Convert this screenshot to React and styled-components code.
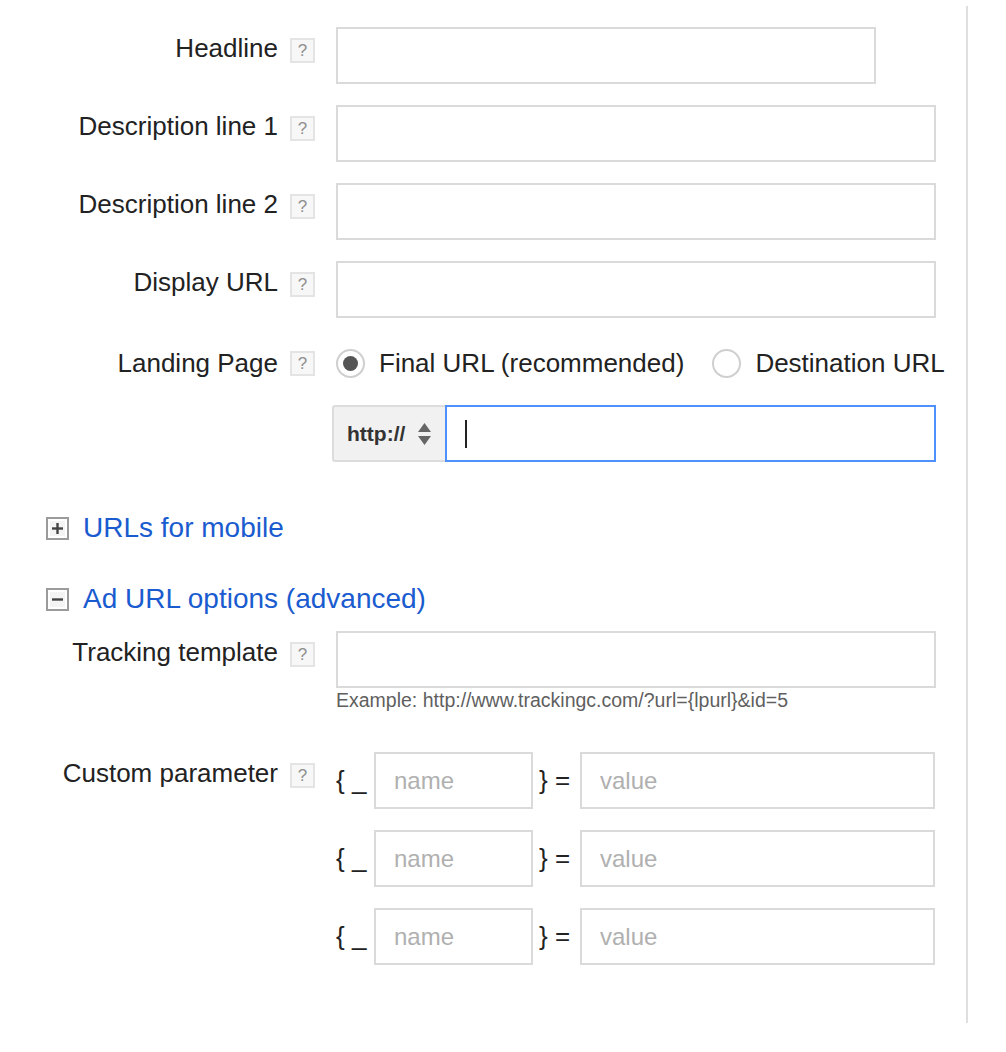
import React from 'react';
import styled, { createGlobalStyle } from 'styled-components';

const Global = createGlobalStyle`
  body {
    margin: 0;
    background: #fff;
    font-family: Arial, "Liberation Sans", Helvetica, sans-serif;
    color: #222;
  }
`;

const Page = styled.div`
  box-sizing: border-box;
  margin-top: 6px;
  width: 968px;
  min-height: 1017px;
  padding-top: 21px;
  border-right: 2px solid #dfdfdf;
`;

const Row = styled.div`
  display: flex;
  align-items: ${(p) => (p.$center ? 'center' : 'flex-start')};
  margin-top: ${(p) => p.$top || 0}px;
`;

const Label = styled.div`
  width: 278px;
  flex-shrink: 0;
  text-align: right;
  font-size: 26px;
  line-height: 30px;
  padding-top: ${(p) => (p.$center ? 0 : 6)}px;
  color: #222;
  white-space: nowrap;
`;

const Help = styled.span`
  box-sizing: border-box;
  width: 25px;
  height: 25px;
  margin-left: 12px;
  margin-top: ${(p) => (p.$center ? 0 : 11)}px;
  flex-shrink: 0;
  border: 2px solid #e4e4e4;
  background: #f7f7f7;
  color: #8f8f8f;
  font-size: 17px;
  line-height: 21px;
  text-align: center;
`;

const Field = styled.div`
  margin-left: 21px;
  display: flex;
  flex-direction: column;
`;

const TextBox = styled.div`
  box-sizing: border-box;
  width: ${(p) => p.$w}px;
  flex-shrink: 0;
  height: 57px;
  border: 2px solid #dadada;
  background: #fff;
  display: flex;
  align-items: center;
  padding-left: 18px;
  font-size: 24px;
  color: #b0b0b0;
`;

const Radios = styled.div`
  display: flex;
  align-items: center;
  flex-shrink: 0;
  white-space: nowrap;
  font-size: 26px;
  line-height: 32px;
  margin-left: 21px;
`;

const RadioOpt = styled.label`
  display: flex;
  align-items: center;
  gap: 14px;
  margin-right: 28px;
`;

const RadioCircle = styled.span`
  box-sizing: border-box;
  width: 29px;
  height: 29px;
  border-radius: 50%;
  border: 2px solid #cfcfcf;
  background: #fff;
  display: flex;
  align-items: center;
  justify-content: center;
  &::after {
    content: '';
    display: ${(p) => (p.$on ? 'block' : 'none')};
    width: 15px;
    height: 15px;
    border-radius: 50%;
    background: #555;
  }
`;

const UrlGroup = styled.div`
  display: flex;
  margin-left: 332px;
  margin-top: 26px;
`;

const Protocol = styled.div`
  box-sizing: border-box;
  width: 113px;
  height: 57px;
  background: #f1f1f1;
  border: 2px solid #dcdcdc;
  border-right: none;
  border-radius: 3px 0 0 3px;
  display: flex;
  align-items: center;
  padding-left: 13px;
  gap: 12px;
  font-size: 21px;
  font-weight: bold;
  color: #333;
`;

const FocusBox = styled.div`
  box-sizing: border-box;
  width: 491px;
  height: 57px;
  border: 2px solid #4d90fe;
  display: flex;
  align-items: center;
  padding-left: 18px;
`;

const Caret = styled.span`
  width: 2px;
  height: 28px;
  background: #222;
`;

const Toggle = styled.div`
  display: flex;
  align-items: center;
  gap: 14px;
  margin-left: 46px;
  margin-top: ${(p) => p.$top}px;
  font-size: 28px;
  line-height: 32px;
  color: #1a5ccf;
`;

const Hint = styled.div`
  font-size: 19.5px;
  line-height: 22px;
  color: #5f5f5f;
  margin-top: 1px;
`;

const ParamList = styled.div`
  margin-left: 21px;
  display: flex;
  flex-direction: column;
  gap: 21px;
`;

const ParamRow = styled.div`
  display: flex;
  align-items: center;
  font-size: 26px;
  color: #222;
`;

const Brace = styled.span`
  width: ${(p) => p.$w}px;
  flex-shrink: 0;
  padding-left: ${(p) => p.$pl || 0}px;
  box-sizing: border-box;
  white-space: nowrap;
`;

function ToggleIcon({ open }) {
  return (
    <svg width="23" height="23" viewBox="0 0 23 23">
      <rect x="1" y="1" width="21" height="21" fill="#fff" stroke="#9b9b9b" strokeWidth="2" />
      <rect x="4" y="4" width="15" height="15" fill="#f4f4f4" />
      <line x1="6" y1="11.5" x2="17" y2="11.5" stroke="#444" strokeWidth="2.4" />
      {!open && <line x1="11.5" y1="6" x2="11.5" y2="17" stroke="#444" strokeWidth="2.4" />}
    </svg>
  );
}

function Arrows() {
  return (
    <svg width="15" height="24" viewBox="0 0 15 24">
      <path d="M7.5 1 L14 10 L1 10 Z" fill="#666" />
      <path d="M7.5 23 L14 14 L1 14 Z" fill="#666" />
    </svg>
  );
}

function FormRow({ label, width = 600, top = 0 }) {
  return (
    <Row $top={top}>
      <Label>{label}</Label>
      <Help>?</Help>
      <Field>
        <TextBox $w={width} />
      </Field>
    </Row>
  );
}

export default function App() {
  return (
    <Page>
      <Global />
      <FormRow label="Headline" width={540} />
      <FormRow label="Description line 1" top={21} />
      <FormRow label="Description line 2" top={21} />
      <FormRow label="Display URL" top={21} />

      <Row $center $top={29}>
        <Label $center>Landing Page</Label>
        <Help $center>?</Help>
        <Radios>
          <RadioOpt>
            <RadioCircle $on />
            Final URL (recommended)
          </RadioOpt>
          <RadioOpt>
            <RadioCircle />
            Destination URL
          </RadioOpt>
        </Radios>
      </Row>

      <UrlGroup>
        <Protocol>
          http://
          <Arrows />
        </Protocol>
        <FocusBox>
          <Caret />
        </FocusBox>
      </UrlGroup>

      <Toggle $top={50}>
        <ToggleIcon />
        URLs for mobile
      </Toggle>
      <Toggle $top={39}>
        <ToggleIcon open />
        Ad URL options (advanced)
      </Toggle>

      <Row $top={16}>
        <Label>Tracking template</Label>
        <Help>?</Help>
        <Field>
          <TextBox $w={600} />
          <Hint>Example: http://www.trackingc.com/?url={'{lpurl}'}&amp;id=5</Hint>
        </Field>
      </Row>

      <Row $top={41}>
        <Label>Custom parameter</Label>
        <Help>?</Help>
        <ParamList>
          {[0, 1, 2].map((i) => (
            <ParamRow key={i}>
              <Brace $w={38}>{'{ _'}</Brace>
              <TextBox $w={159}>name</TextBox>
              <Brace $w={47} $pl={6}>{'} ='}</Brace>
              <TextBox $w={355}>value</TextBox>
            </ParamRow>
          ))}
        </ParamList>
      </Row>
    </Page>
  );
}
